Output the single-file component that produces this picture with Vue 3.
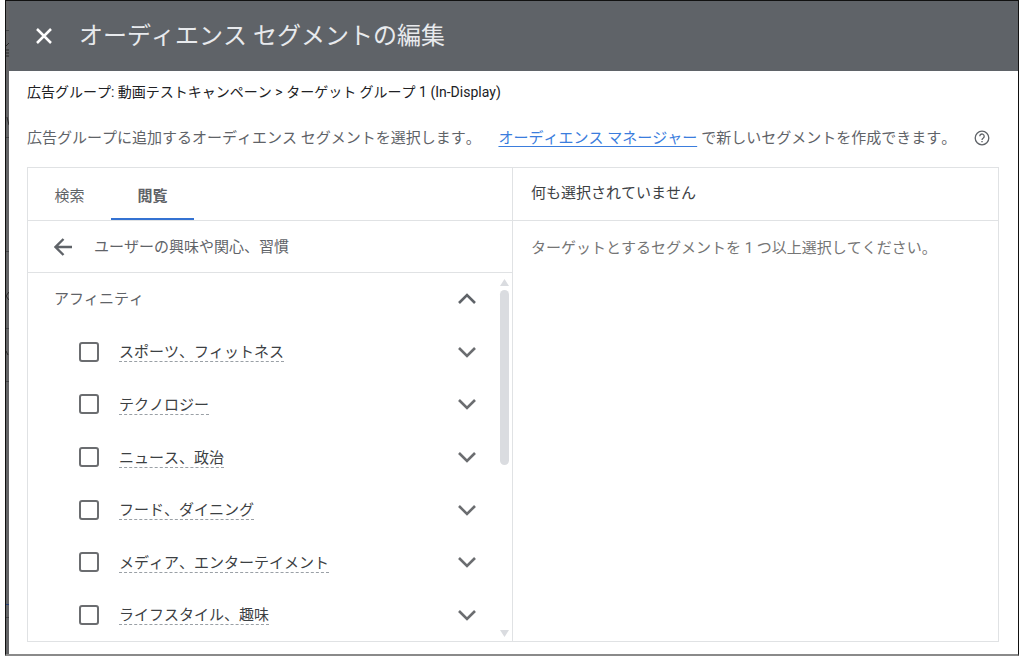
<script setup>
import {ref} from 'vue';

const activeTab = ref('browse');
const open = ref(true);

const tabs = [
    {id: 'search', label: '検索'},
    {id: 'browse', label: '閲覧'},
];

const segments = ref([
    {id: 'sports', label: 'スポーツ、フィットネス', checked: false},
    {id: 'tech', label: 'テクノロジー', checked: false},
    {id: 'news', label: 'ニュース、政治', checked: false},
    {id: 'food', label: 'フード、ダイニング', checked: false},
    {id: 'media', label: 'メディア、エンターテイメント', checked: false},
    {id: 'lifestyle', label: 'ライフスタイル、趣味', checked: false},
]);
</script>

<template>
    <div class="page">
        <div class="window">
            <svg class="backdrop" viewBox="0 0 3 654" preserveAspectRatio="xMinYMin slice" aria-hidden="true">
                <path d="M0 29.500h3M0 136.500h3M0 250.500h3M0 327.500h3M0 380.500h3M0 616.500h3" stroke="#444547" />
                <path d="M0 45l3-3M0 49h3M0 52h3M0 55h3M1 116l2 8M3 291l-3 4 3 4M0 350l2 4" stroke="#2b2b2b" fill="none" />
                <path d="M0 603.500h3" stroke="#26427a" />
            </svg>
            <section class="dialog">
                <header class="dialog-header">
                    <button type="button" class="icon-btn" aria-label="閉じる">
                        <svg width="18" height="18" viewBox="0 0 18 18">
                            <path d="M2 2l14 14M16 2L2 16" stroke="#fff" stroke-width="2.500" />
                        </svg>
                    </button>
                    <h1>オーディエンス セグメントの編集</h1>
                </header>

                <div class="dialog-body">
                    <p class="breadcrumb">広告グループ: 動画テストキャンペーン &gt; ターゲット グループ 1 (In-Display)</p>
                    <div class="intro">
                        <p>広告グループに追加するオーディエンス セグメントを選択します。 <a href="#">オーディエンス マネージャー</a>で新しいセグメントを作成できます。</p>
                        <button type="button" class="icon-btn" aria-label="ヘルプ">
                            <svg width="16" height="16" viewBox="0 0 16 16" fill="none" stroke="#5f6368">
                                <circle cx="8" cy="8" r="6.800" stroke-width="1.300" />
                                <path d="M5.800 6.300a2.200 2.200 0 1 1 3.500 1.700C8.400 8.600 8 8.900 8 9.900" stroke-width="1.300" />
                                <path d="M8 10.900v1.400" stroke-width="1.400" />
                            </svg>
                        </button>
                    </div>

                    <div class="picker">
                        <div class="picker-left">
                            <nav class="tabs">
                                <button
                                    v-for="tab in tabs"
                                    :key="tab.id"
                                    type="button"
                                    class="tab"
                                    :class="{active: activeTab === tab.id}"
                                    @click="activeTab = tab.id"
                                >{{ tab.label }}</button>
                            </nav>
                            <div class="back-row">
                                <button type="button" class="icon-btn" aria-label="戻る">
                                    <svg width="18" height="18" viewBox="0 0 18 18" fill="none" stroke="#5f6368" stroke-width="2.400">
                                        <path d="M18 9H2M9.500 1L1.500 9l8 8" />
                                    </svg>
                                </button>
                                <span>ユーザーの興味や関心、習慣</span>
                            </div>
                            <div class="scroll-area">
                                <div class="list">
                                    <div class="row group">
                                        <span>アフィニティ</span>
                                        <button type="button" class="icon-btn" aria-label="折りたたむ" @click="open = !open">
                                            <svg width="18" height="12" viewBox="0 0 18 12">
                                                <path d="M1 10l8-8 8 8" fill="none" stroke="#5f6368" stroke-width="2.600" />
                                            </svg>
                                        </button>
                                    </div>
                                    <template v-if="open">
                                        <div v-for="segment in segments" :key="segment.id" class="row">
                                            <input :id="segment.id" v-model="segment.checked" type="checkbox">
                                            <label :for="segment.id">{{ segment.label }}</label>
                                            <button type="button" class="icon-btn" aria-label="展開">
                                                <svg width="18" height="12" viewBox="0 0 18 12">
                                                    <path d="M1 2l8 8 8-8" fill="none" stroke="#6b6d70" stroke-width="2.600" />
                                                </svg>
                                            </button>
                                        </div>
                                    </template>
                                </div>
                                <div class="scrollbar">
                                    <svg width="9" height="7" viewBox="0 0 9 7"><path d="M4.500 0L9 7H0z" fill="#dadce0" /></svg>
                                    <div class="track"><div class="thumb"></div></div>
                                    <svg width="9" height="7" viewBox="0 0 9 7"><path d="M0 0h9L4.500 7z" fill="#dadce0" /></svg>
                                </div>
                            </div>
                        </div>
                        <div class="picker-right">
                            <h2>何も選択されていません</h2>
                            <p>ターゲットとするセグメントを 1 つ以上選択してください。</p>
                        </div>
                    </div>
                </div>
            </section>
        </div>
    </div>
</template>

<style>
body {
    margin: 0;
    background: #fff;
}
</style>

<style scoped>
* {
    box-sizing: border-box;
}
.page {
    display: flex;
    min-height: 100vh;
    padding: 0 3px 8px 5px;
    font-family: Roboto, "Noto Sans CJK JP", sans-serif;
    font-size: 15px;
    font-kerning: none;
    line-height: 24px;
    color: #5f6368;
}
h1, h2, p {
    margin: 0;
    font-weight: 400;
}
button {
    padding: 0;
    border: 0;
    background: none;
    font: inherit;
    font-kerning: none;
    color: inherit;
    cursor: pointer;
}
.icon-btn {
    display: flex;
    flex: none;
}
.window {
    position: relative;
    display: flex;
    flex: 1;
    padding-left: 3px;
    border: 1px solid #111;
    border-bottom: 2px solid #8a8a8a;
    background: #636466;
}
.backdrop {
    position: absolute;
    top: 0;
    left: 0;
    width: 3px;
    height: 100%;
}
.dialog {
    display: flex;
    flex: 1;
    flex-direction: column;
    background: #fff;
}
.dialog-header {
    display: flex;
    align-items: center;
    gap: 26px;
    height: 70px;
    padding-left: 26px;
    background: #5f6368;
}
.dialog-header h1 {
    font-size: 24px;
    line-height: 32px;
    color: #e8eaed;
}
.dialog-body {
    display: flex;
    flex: 1;
    flex-direction: column;
    padding: 9px 19px 12px 18px;
}
.breadcrumb {
    font-size: 14px;
    color: #202124;
}
.intro {
    display: flex;
    align-items: center;
    justify-content: space-between;
    padding: 22px 9px 17px 0;
}
.intro a {
    margin: 0 4px 0 14px;
    color: #3b7ddd;
    text-decoration: underline;
    text-underline-offset: 3px;
}
.picker {
    display: grid;
    flex: 1;
    grid-template-columns: 1fr 1fr;
    border: 1px solid #e0e2e4;
}
.picker-left {
    display: flex;
    flex-direction: column;
    border-right: 1px solid #e0e2e4;
}
.tabs {
    display: flex;
    height: 53px;
    border-bottom: 1px solid #e0e2e4;
}
.tab {
    width: 83px;
    height: 52px;
    padding-top: 6px;
    border-bottom: 2px solid transparent;
}
.tab.active {
    border-bottom-color: #3472d2;
    font-weight: 600;
}
.back-row {
    display: flex;
    align-items: center;
    gap: 22px;
    height: 52px;
    padding-left: 26px;
    border-bottom: 1px solid #e0e2e4;
}
.scroll-area {
    display: flex;
    flex: 1;
}
.list {
    display: flex;
    flex: 1;
    flex-direction: column;
}
.row {
    display: flex;
    flex: 1 0 52px;
    align-items: center;
    padding: 0 21px 0 51px;
}
.row.group {
    padding-left: 26px;
}
.row .icon-btn {
    margin-left: auto;
}
.row input {
    width: 20px;
    height: 20px;
    margin: 0 20px 0 0;
    border: 2px solid #6b6d70;
    border-radius: 3px;
    background: #fff;
    appearance: none;
}
.row input:checked {
    border-color: #1a73e8;
    background: #1a73e8;
}
.row label {
    padding-top: 2px;
    border-bottom: 1px dashed #9aa0a6;
    line-height: 18px;
    color: #3c4043;
}
.scrollbar {
    display: flex;
    flex-direction: column;
    align-items: center;
    gap: 4px;
    width: 15px;
    padding: 6px 3px 4px;
}
.scrollbar svg {
    flex: none;
}
.track {
    flex: 1;
    width: 9px;
}
.thumb {
    height: 52%;
    border-radius: 5px;
    background: #dadce0;
}
.picker-right h2 {
    height: 53px;
    padding: 13px 18px;
    border-bottom: 1px solid #e0e2e4;
    font-size: 15px;
    color: #3c4043;
}
.picker-right p {
    padding: 15px 18px;
    color: #757575;
}
</style>
